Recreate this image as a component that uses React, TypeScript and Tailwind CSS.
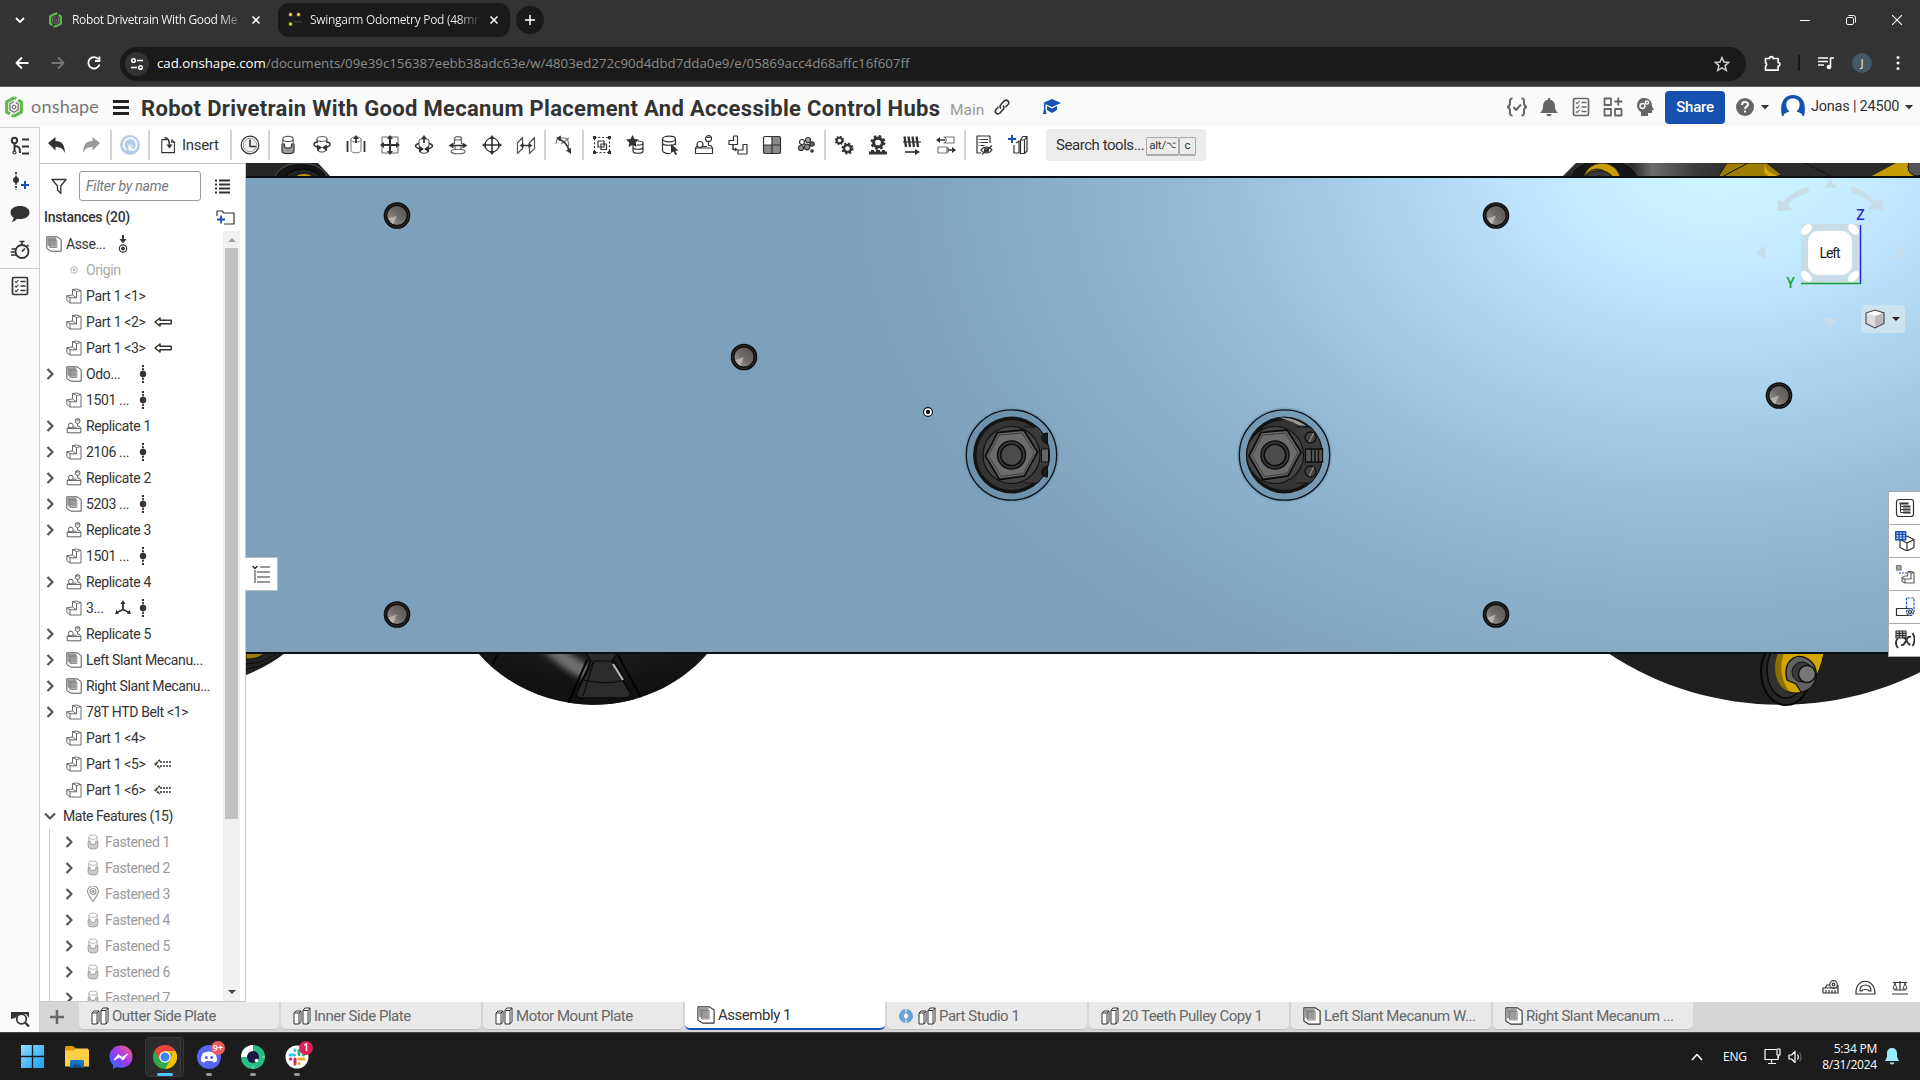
import React from "react";

type P = { children?: React.ReactNode; className?: string; vb?: string };

/** 20px line icon shell shared by every glyph on the page. */
const I = ({ children, className = "size-5", vb = "0 0 20 20" }: P) => (
  <svg viewBox={vb} className={`shrink-0 ${className}`} fill="none" stroke="currentColor" strokeWidth="1.2" strokeLinejoin="round">
    {children}
  </svg>
);

/* ---------- toolbar glyphs ---------- */
const Cyl = () => (
  <g stroke="#777" strokeWidth="1">
    <ellipse cx="10" cy="4.500" rx="5" ry="2.500" />
    <path d="M5 4.500v11c0 3 10 3 10 0v-11" />
  </g>
);
const Fastened = ({ className }: { className?: string }) => (
  <I className={className}>
    <path d="M4 9v7c0 3.500 12 3.500 12 0V9h-2.500v2.500c0 2-7 2-7 0V9z" fill="#9a9a9a" stroke="#333" />
    <ellipse cx="10" cy="4" rx="5.200" ry="2.600" stroke="#666" />
    <path d="M4.800 4v7M15.200 4v7" stroke="#666" />
  </I>
);
const Revolute = () => (
  <I><ellipse cx="10" cy="4" rx="5" ry="2.500" stroke="#666" /><path d="M5 4v4M15 4v4M5.500 14c1 4 8 4 9 0" stroke="#666" />
    <path d="M7.500 12.500C4 12 2 10.500 2 9.500M12.500 12.500C16 12 18 10.500 18 9.500M2 9.500C2 8 4 7 6 7M18 9.500C18 8 16 7 14 7" strokeWidth="1.500" /><path d="M5 9.500l5 3L5 16zM15 9.500l-5 3 5 3.500z" fill="currentColor" stroke="none" /></I>
);
const Slider = () => (
  <I><Cyl /><path d="M1.500 6v11M18.500 6v11" strokeWidth="1.800" /><path d="M10 8V2" strokeWidth="1.800" /><path d="M7 4l3-4 3 4z" fill="currentColor" stroke="none" /></I>
);
const Planar = () => (
  <I><path d="M2 2h16v16H2z" strokeWidth="1" stroke="#666" /><path d="M10 3v14M3 10h14" strokeWidth="2" /><path d="M10 0l3 4H7zM10 20l3-4H7zM0 10l4-3v6zM20 10l-4-3v6z" fill="currentColor" stroke="none" /></I>
);
const Cylindrical = () => (
  <I><path d="M5 6v5M15 6v5M5 6c0-3 10-3 10 0M6 16c1 3 7 3 8 0" stroke="#666" /><path d="M10 8V3" strokeWidth="1.800" /><path d="M7 4l3-4 3 4z" fill="currentColor" stroke="none" />
    <path d="M8 14C4 14 1.500 12 1.500 11S3 9 5 8.500M12 14c4 0 6.500-2 6.500-3S17 9 15 8.500" strokeWidth="1.500" /><path d="M5 10.500l5 3.500-5 3.500zM15 10.500L10 14l5 3.500z" fill="currentColor" stroke="none" /></I>
);
const PinSlot = () => (
  <I><path d="M6.500 9V3.500C6.500 1 13.500 1 13.500 3.500V9M6.500 3.500c0 2 7 2 7 0M3 16.500c0-3 14-3 14 0s-14 3-14 0M7 11v3M13 11v3" stroke="#666" /><path d="M4 10.500h12" strokeWidth="1.500" /><path d="M.5 10.500l5-3v6zM19.500 10.500l-5-3v6z" fill="currentColor" stroke="none" /></I>
);
const Ball = () => (
  <I><circle cx="10" cy="10" r="7" /><path d="M10 2v16M2 10h16" strokeWidth="1.600" /><path d="M10 0l3 4H7zM10 20l3-4H7zM0 10l4-3v6zM20 10l-4-3v6z" fill="currentColor" stroke="none" /></I>
);
const Parallel = () => (
  <I><path d="M1.500 18.500V8l5-5.500v11zM13.500 18.500V8l5-5.500v11z" stroke="#555" /><path d="M6 10.500h8" strokeWidth="1.500" /><path d="M3.500 10.500l4-2.500v5zM16.500 10.500l-4-2.500v5z" fill="currentColor" stroke="none" /></I>
);
const Tangent = () => (
  <I><path d="M2 9c0-4 2-6 5-6M7 3h4c3 1 4 3 3.500 8M7 9l8-6" stroke="#777" /><path d="M5 4c5 2 8 5 10 11" strokeWidth="1.800" /><path d="M2 3l5-2.500-.5 6zM17 19l-5-3.500 5-2.500z" fill="currentColor" stroke="none" /></I>
);
const Group = () => (
  <I><rect x="2.500" y="2.500" width="15" height="15" strokeDasharray="2 1.800" /><path d="M6 6h6v6H6zM9 9h5.500v5.500H9z" /><path d="M1 1h3v3H1zM16 1h3v3h-3zM1 16h3v3H1zM16 16h3v3h-3z" fill="currentColor" stroke="none" /></I>
);
const StarCyl = () => (
  <I><path d="M7 9v7c0 3 10 3 10 0V7M7 12c0 3 10 3 10 0M12 6c3 0 5 .5 5 2s-3 2.500-6 2" /><path d="M6.500 0l2 4 4.500.500-3.300 3L10.500 12 6.500 10l-4 2 .8-4.500L0 4.500 4.500 4z" fill="currentColor" stroke="none" /></I>
);
const CylPick = () => (
  <I><ellipse cx="9" cy="4" rx="6.500" ry="2.800" /><path d="M2.500 4v11.500c0 2 4 3.500 8 2.800M15.500 4v6M2.500 8c0 3 13 3 13 0" /><path d="M11 9l7.500 6.500-3.200.3 1.800 3.500-1.800.7-1.600-3.500L11 18z" fill="currentColor" stroke="none" /></I>
);
const Replicate = ({ className }: { className?: string }) => (
  <I className={className}><circle cx="14.500" cy="3.700" r="3" /><path d="M14.500 6.700V10.500M12.500 2.500h4" /><circle cx="6" cy="9.500" r="3" /><path d="M1.500 13h17v5.500h-17zM1.500 13l2-2M18.500 13L17 10.500h-2M9 11.500h4" /></I>
);
const LinPattern = () => (
  <I><path d="M5.500 1h4v8.500H1V5.500h4.500zM15 9.500h4V19H10v-4h5z" /><path d="M5 10v4.500h3" strokeWidth="1.500" /><path d="M7 12.500l3 2-3 2z" fill="currentColor" stroke="none" /></I>
);
const Grid4 = () => (
  <I><rect x="1.500" y="1.500" width="17" height="17" rx="1.500" fill="#8a8a8a" stroke="#333" /><path d="M2.200 2.200H10V10H2.200z" fill="#fff" stroke="none" /><path d="M10 1.500v17M1.500 10h17" /></I>
);
const Explode = () => (
  <I><circle cx="6" cy="7" r="2.500" /><circle cx="12" cy="5" r="2.500" fill="#aaa" /><circle cx="5" cy="13" r="2.500" fill="#999" /><circle cx="11" cy="12" r="2.800" fill="#888" /><circle cx="16" cy="9" r="2.200" fill="#666" /><circle cx="16" cy="16" r="1.200" fill="#444" /></I>
);
const Gear = ({ x, y, r }: { x: number; y: number; r: number }) => (
  <g><circle cx={x} cy={y} r={r} strokeWidth={r * 0.7} /><circle cx={x} cy={y} r={r * 1.45} strokeWidth={r * 0.5} strokeDasharray={`${r * 0.57} ${r * 0.57}`} /></g>
);
const Gears = () => <I><Gear x={5.500} y={5.500} r={2.800} /><Gear x={13.500} y={13.500} r={3.600} /></I>;
const RackGear = () => <I><Gear x={10} y={7.500} r={4.400} /><path d="M1 19.500v-3h2V15h3v1.500h2V15h4v1.500h2V15h3v1.500h2v3z" fill="currentColor" stroke="none" /></I>;
const Screw = () => <I><path d="M2.500 1.500L4 12M6.500 1.500L8 12M10.500 1.500L12 12M14.500 1.500L16 12" strokeWidth="2.300" /><path d="M1 7h18" /><path d="M3 17h11" strokeWidth="1.600" /><path d="M13 14l5 3-5 3z" fill="currentColor" stroke="none" /></I>;
const LinRel = () => <I><path d="M8 2h10v6H8c3-1 3-5 0-6zM2 12h9v6H2zM11 12c2 1 2 5 0 6" stroke="#777" /><path d="M3 5h6M12 15h5" strokeWidth="1.600" /><path d="M0 5l4-3v6zM20 15l-4-3v6z" fill="currentColor" stroke="none" /></I>;
const Display = () => <I><path d="M16 8V1H3v17h4" /><path d="M6.500 4.500H14M6.500 7.500H14M6.500 10.500h4M4.500 4.500h1M4.500 7.500h1M4.500 10.500h1" /><path d="M7 15c3-4 8-4 11 0-3 4-8 4-11 0z" /><circle cx="12.500" cy="15" r="2" fill="#666" /><path d="M8 19.500l10-9" /></I>;
const AddCfg = () => <I><path d="M8 8l3-2v12H6v-8M11 18V6M12.500 5L15 1.500h4V16l-2.500 2.500h-4zM12.500 5h4v13.500M16.500 5L19 1.500" /><path d="M4 0v8M0 4h8" stroke="#1651b0" strokeWidth="2" /></I>;

/* ---------- tree glyphs ---------- */
const PartIcon = () => (
  <I className="size-4" vb="0 0 16 16"><path d="M6.500 7V1.500L10.500 1 15 2.500v12.500H4L.8 12.500V7.800L6.500 7M4 15v-5.200h6.500V3.500M.8 7.800L4 9.800M6.500 7l4 2.800M6.500 1.500l4 2 4.500-1" stroke="#5a5a5a" strokeWidth=".9" /></I>
);
const AsmIcon = ({ className = "size-4 text-[#555]" }: { className?: string }) => (
  <I className={className} vb="0 0 16 16"><path d="M.8.8H11L15.200 3.500v11.700H5L.8 12.500z" strokeWidth="1" fill="#fff" /><path d="M1.300 1.300h9v9.500H4L1.300 9z" fill="#9b9b9b" stroke="none" /><path d="M2 2.500l2 1.500h6.800v7.500H4V4" stroke="#777" strokeWidth=".8" /></I>
);
const StudioIcon = () => (
  <I className="size-[18px]" vb="0 0 18 18"><path d="M1 6l2-2h5v10.500L6 17H1zM1 6h5v11M6 6l2-2M10 3.500l2-2.500h5v13.500L15 17h-5zM10 3.500h5V17M15 3.500L17 1" stroke="#333" strokeWidth="1" fill="#fff" /></I>
);
const Dof = () => (
  <I className="size-[18px]" vb="0 0 18 18"><path d="M9 0v18" strokeWidth="2" strokeDasharray="2 1.200" /><circle cx="9" cy="9" r="3.200" fill="currentColor" stroke="none" /></I>
);
const Fixed = () => (
  <I className="size-[18px]" vb="0 0 18 18"><path d="M9 0v6" strokeWidth="2" /><path d="M5.500 4h7L9 8.500z" fill="currentColor" stroke="none" /><circle cx="9" cy="13.500" r="3.700" /><circle cx="9" cy="13.500" r="1.300" fill="currentColor" /></I>
);
const Tri = () => (
  <I className="size-4" vb="0 0 16 16"><path d="M8 2v7.500L2 12.500M8 9.500l6 3" strokeWidth="1.800" /><path d="M5.500 4L8 0l2.500 4zM0 14l1.500-4.200 2.500 4zM16 14l-1.500-4.200-2.500 4z" fill="currentColor" stroke="none" /></I>
);
const Arrow = ({ dash }: { dash?: boolean }) => (
  <I className="h-[10px] w-[18px]" vb="0 0 18 10">
    {dash ? (
      <g strokeWidth="1.700"><path d="M6 1L1.200 5 6 9" strokeDasharray="2.200 .7" /><path d="M6 3h12M6 7h12" strokeDasharray="2 1" /></g>
    ) : (
      <path d="M1 5l5-4v2.200h11.200v3.600H6V9z" strokeWidth="1.500" />
    )}
  </I>
);
const Chev = ({ down }: { down?: boolean }) => (
  <I className={down ? "w-3 h-2" : "w-2 h-3"} vb={down ? "0 0 12 8" : "0 0 8 12"}><path d={down ? "M1 1.500l5 5 5-5" : "M1.500 1l5 5-5 5"} stroke="#555" strokeWidth="2.200" /></I>
);
const Checklist = ({ className }: { className?: string }) => (
  <I className={className}><rect x="2.500" y="1.500" width="15" height="17" rx="1.500" strokeWidth="1.700" /><path d="M5 5.500l1.200 1.200L8.500 4M5 10l1.200 1.200L8.500 8.500M5 14.500l1.200 1.200L8.500 13" strokeWidth="1.100" /><path d="M10.500 5.500h5M10.500 10h5M10.500 14.500h5" strokeWidth="1.700" /></I>
);
const OnshapeMark = ({ className }: { className?: string }) => (
  <svg viewBox="0 0 20 24" className={`shrink-0 ${className}`} fill="none">
    <path d="M10.500 1.800L2 6.500v11l3.500 2M9.500 22.200l8.500-4.700v-11L14.500 4.500M10.500 1.800l2 1.200M9.500 22.200l-2-1.200" stroke="#5db947" strokeWidth="3.400" />
    <path d="M10 6L5.500 8.700v6.500L10 17.800l4.500-2.600V8.700L12 7.300" stroke="#777" strokeWidth="1.500" />
    <path d="M10 10l-1.800 1v2.300l1.800 1 1.800-1V11z" stroke="#777" strokeWidth="1.400" />
  </svg>
);
const Caret = () => <svg viewBox="0 0 8 5" className="w-2 h-[5px] shrink-0"><path d="M0 0h8L4 4.500z" fill="#333" /></svg>;

/* ---------- tree data ---------- */
type Row = { t: string; k: "asm" | "part" | "rep"; c?: boolean; m?: "dof" | "arrow" | "dash" | "tri" };
const rows: Row[] = [
  { t: "Part 1 <1>", k: "part" },
  { t: "Part 1 <2>", k: "part", m: "arrow" },
  { t: "Part 1 <3>", k: "part", m: "arrow" },
  { t: "Odo...", k: "asm", c: true, m: "dof" },
  { t: "1501 ...", k: "part", m: "dof" },
  { t: "Replicate 1", k: "rep", c: true },
  { t: "2106 ...", k: "part", c: true, m: "dof" },
  { t: "Replicate 2", k: "rep", c: true },
  { t: "5203 ...", k: "asm", c: true, m: "dof" },
  { t: "Replicate 3", k: "rep", c: true },
  { t: "1501 ...", k: "part", m: "dof" },
  { t: "Replicate 4", k: "rep", c: true },
  { t: "3...", k: "part", m: "tri" },
  { t: "Replicate 5", k: "rep", c: true },
  { t: "Left Slant Mecanu...", k: "asm", c: true },
  { t: "Right Slant Mecanu...", k: "asm", c: true },
  { t: "78T HTD Belt <1>", k: "part", c: true },
  { t: "Part 1 <4>", k: "part" },
  { t: "Part 1 <5>", k: "part", m: "dash" },
  { t: "Part 1 <6>", k: "part", m: "dash" },
];

const TreeRow = ({ r }: { r: Row }) => (
  <div className="flex h-[26px] items-center">
    <span className="flex w-[20px] justify-center">{r.c && <Chev />}</span>
    <span className="ml-[6px] flex w-4">{r.k === "part" ? <PartIcon /> : r.k === "asm" ? <AsmIcon /> : <Replicate className="size-4 text-[#555]" />}</span>
    <span className={`ml-1 whitespace-nowrap pt-px ${r.m === "dof" ? "w-[48px]" : r.m === "tri" ? "w-[29px]" : r.m ? "w-[68px]" : ""}`}>{r.t}</span>
    {r.m === "tri" && <Tri />}
    {(r.m === "dof" || r.m === "tri") && <span className={r.m === "tri" ? "ml-[3px]" : ""}><Dof /></span>}
    {r.m === "arrow" && <Arrow />}
    {r.m === "dash" && <Arrow dash />}
  </div>
);

const Tool = ({ children, className = "" }: P) => <span className={`flex h-8 w-[34px] items-center justify-center ${className}`}>{children}</span>;
const Sep = () => <span className="mx-px h-[30px] w-[2px] bg-[#d4d4d4]" />;

/* ---------- 3D viewport ---------- */
const Hole = ({ x, y }: { x: number; y: number }) => (
  <g transform={`translate(${x} ${y})`}>
    <circle r="13.300" fill="#0c0c0c" /><circle r="11.500" fill="none" stroke="#444" strokeWidth=".7" />
    <circle r="9.600" fill="url(#cone)" /><path d="M0 0l-8.500 3 4.500 6z" fill="#e8e0dc" opacity=".5" />
  </g>
);
const Hub = ({ x, dx }: { x: number; dx: number }) => (
  <g transform={`translate(${x} 455)`}>
    <circle r="46" fill="none" stroke="#5f87a3" strokeWidth="3" opacity=".35" />
    <circle r="42" fill="none" stroke="#5b7f99" strokeWidth="7" opacity=".5" />
    <circle r="45.200" fill="none" stroke="#0d1115" strokeWidth="1.300" />
    <circle r="38.500" fill="#141414" />
    <circle r="35.500" fill="#343434" stroke="#111" strokeWidth="1" />
    {dx !== 0 && <path d="M-5-37.500C8-37 15-34 22-29l-8-1C7-34 2-35-5-37.500z" fill="#9a9a9a" />}
    <path d="M12-28h14c16 16 16 40 0 56H12" fill="#3a3a3a" stroke="#111" strokeWidth="1" />
    {dx !== 0 ? (
      <g stroke="#0d0d0d" strokeWidth="1.300"><circle cx="26" cy="-17.500" r="5.500" fill="#444" /><circle cx="26" cy="16.500" r="5.500" fill="#444" /><path d="M25-13l4-9M25 21l4-9" stroke="#888" /><path d="M21-6h17V7H21z" fill="#555" /><path d="M27-6V7M30.500-6V7M34-6V7" /></g>
    ) : (
      <g stroke="#0d0d0d" strokeWidth="1"><path d="M30-6h7V7h-7z" fill="#666" /><path d="M36-22c-8 0-8 9 0 11zM36 22c-8 0-8-9 0-11z" fill="#1a1a1a" /></g>
    )}
    <g transform={`translate(${dx} 0)`}>
      <circle r="28.500" fill="#454545" stroke="#111" strokeWidth="1.200" />
      <path d="M-26 1L-14-22.500 12-25 26-3 13 21-12 24.500z" fill="#6c6c6c" stroke="#0e0e0e" strokeWidth="1.800" />
      <path d="M-23 .8L-12.500-20 10.500-22 23-2.600 12 18.500-10.500 21.500z" fill="none" stroke="#303030" strokeWidth=".8" />
      <circle r="14" fill="#3c3c3c" stroke="#111" strokeWidth="1.500" /><circle r="10.800" fill="#4b4b4b" stroke="#0c0c0c" strokeWidth="1.500" />
    </g>
  </g>
);

const Viewport = () => (
  <svg viewBox="246 163 1674 839" className="block h-[839px] w-[1674px]">
    <defs>
      <radialGradient id="plate" gradientUnits="userSpaceOnUse" cx="0" cy="0" r="1" gradientTransform="translate(1725 155) rotate(-4) scale(870 600)">
        <stop offset="0" stopColor="#d0f5ff" /><stop offset=".12" stopColor="#c9f0ff" /><stop offset=".24" stopColor="#bee4fe" />
        <stop offset=".4" stopColor="#aad2ec" /><stop offset=".6" stopColor="#96bbd5" /><stop offset=".8" stopColor="#87adc7" /><stop offset="1" stopColor="#7da1bb" />
      </radialGradient>
      <linearGradient id="cone" x1="0" y1="1" x2="1" y2="0"><stop offset="0" stopColor="#a8a19d" /><stop offset=".5" stopColor="#6f6a67" /><stop offset="1" stopColor="#565250" /></linearGradient>
      <radialGradient id="tyre" cx=".5" cy="0" r=".7"><stop offset="0" stopColor="#1c1c1c" /><stop offset="1" stopColor="#111" /></radialGradient>
      <linearGradient id="metal" x1="0" x2="1"><stop offset="0" stopColor="#222" /><stop offset=".2" stopColor="#6c6c6c" /><stop offset=".6" stopColor="#3a3a3a" /><stop offset="1" stopColor="#2a2a2a" /></linearGradient>
      <filter id="soft"><feGaussianBlur stdDeviation="3" /></filter>
      <clipPath id="lw"><path d="M478 653c60 69 170 69 230 0z" /></clipPath>
    </defs>
    <path d="M246 163h1674v839H246z" fill="#fff" />
    {/* wheels above the plate */}
    <path d="M246 163h72l13 14h-85z" fill="#262626" />
    <ellipse cx="301" cy="181" rx="27" ry="18" fill="#141414" stroke="#555" /><ellipse cx="303" cy="182" rx="19" ry="13" fill="#222" stroke="#000" /><ellipse cx="304" cy="180" rx="10" ry="6" fill="#c79b00" />
    <path d="M1562 177l14-14h344v14z" fill="#2a2a2a" />
    <path d="M1630 163h110l-18 14h-85z" fill="url(#metal)" />
    <ellipse cx="1604" cy="179" rx="34" ry="20" fill="#161616" stroke="#444" /><ellipse cx="1602" cy="182" rx="19" ry="19" fill="#c99c00" stroke="#222" /><ellipse cx="1597" cy="181" rx="13" ry="12" fill="#7d6300" stroke="#222" /><path d="M1586 176c6-7 20-7 26 0l-4 3c-6-4-12-4-18 0z" fill="#3a3a3a" stroke="#111" />
    <path d="M1727 163h40l15 12-10 2h-54z" fill="#9e7d05" stroke="#111" /><path d="M1765 163c0 7 4 12 20 14h-16l-5-5z" fill="#dcaf00" /><path d="M1722 177l26-14" stroke="#111" />
    <path d="M1805 163l28 14" stroke="#111" /><path d="M1870 177l26-14h24v14z" fill="#c49b00" /><circle cx="1917" cy="167" r="9" fill="#555" stroke="#111" />
    {/* wheels below the plate */}
    <path d="M246 653h39c-11 9-24 16-39 22z" fill="#232323" /><path d="M246 653h18c-3 4-9 6-18 6z" fill="#9b7c00" stroke="#111" /><path d="M246 664c14-1 22-4 31-11M246 669c16-2 26-8 36-16" fill="none" stroke="#0a0a0a" />
    <path d="M478 653c60 69 170 69 230 0z" fill="url(#tyre)" />
    <g clipPath="url(#lw)">
      <path d="M540 650h25l27 18-5 13c-20-8-30-20-47-31z" fill="#8d8d8d" filter="url(#soft)" opacity=".75" />
      <path d="M588 655l26 0 2 8 20 36-2 6H568l24-46z" fill="#101010" />
      <path d="M586 653l5 8-14 32c-1 3 1 5 5 5h43c5 0 6-3 5-6l-18-31 6-8z" fill="#2b2b2b" stroke="#090909" strokeWidth="1.500" />
      <path d="M594 661h21l10 19c-14 4-26 3-42 0zM594 661l-11 35M612 661l17 31" fill="none" stroke="#070707" />
      <path d="M613 664l10 16" stroke="#bbb" strokeWidth="2" /><path d="M618 655l27 50M587 660l-20 46M497 655l-6 12" stroke="#030303" strokeWidth="2" />
    </g>
    <path d="M1608 653c103 69 243 69 345 0z" fill="#1f1f1f" />
    <ellipse cx="1786" cy="672" rx="25" ry="33" fill="#252525" stroke="#070707" strokeWidth="2" /><ellipse cx="1786" cy="670" rx="19" ry="28" fill="#313131" stroke="#080808" strokeWidth="1.500" />
    <path d="M1780 653h44c-3 16-12 40-28 40-18 0-25-22-16-40z" fill="#d2a800" stroke="#151200" /><path d="M1784 653c-5 14-3 28 6 39-15-4-18-25-12-39z" fill="#8c6f00" />
    <path d="M1787 680c-6-22 15-32 27-15 6 12 0 25-13 27l-5-8z" fill="#626262" stroke="#111" strokeWidth="1.300" /><circle cx="1802" cy="672" r="10" fill="#3a3a3a" stroke="#101010" /><circle cx="1807" cy="674" r="8.500" fill="#777" stroke="#111" strokeWidth="1.500" />
    {/* side plate */}
    <path d="M246 177h1674v476H246z" fill="url(#plate)" />
    <path d="M246 177h1674M246 653h1674" stroke="#0b0f13" strokeWidth="2" />
    <Hole x={397} y={215.500} /><Hole x={1496} y={215.500} /><Hole x={744} y={357} /><Hole x={1779} y={395.500} /><Hole x={397} y={614.500} /><Hole x={1496} y={614.500} />
    <circle cx="928" cy="412" r="4" fill="#111" stroke="#111" strokeWidth="2" /><circle cx="928" cy="412" r="3" fill="#111" stroke="#fff" strokeWidth="1.700" />
    <Hub x={1011.500} dx={0} /><Hub x={1284.500} dx={-9.500} />
    {/* view cube */}
    <g fill="#c9dde9">
      <path d="M1830 179l7 9h-14zM1830 328l7-10h-14zM1756 253l9-7v14zM1905 253l-9-7v14z" />
      <path d="M1808 186l1 6c-9 3-15 7-21 12l4 6-15 1 1-12 5 3c8-8 15-12 25-16zM1852 186l-1 6c9 3 15 7 21 12l-4 5 15 2-1-12-5 3c-8-8-15-12-25-16z" />
      <path d="M1801 224h59v59h-59z" />
    </g>
    <rect x="1808" y="231" width="44" height="44" rx="10" fill="#fff" />
    <g fill="#fff"><ellipse cx="1806.500" cy="229.500" rx="6.500" ry="4" transform="rotate(-45 1806.500 229.500)" /><ellipse cx="1853.500" cy="229.500" rx="6.500" ry="4" transform="rotate(45 1853.500 229.500)" /><ellipse cx="1806.500" cy="276.500" rx="6.500" ry="4" transform="rotate(45 1806.500 276.500)" /><ellipse cx="1853.500" cy="276.500" rx="6.500" ry="4" transform="rotate(-45 1853.500 276.500)" /></g>
    <path d="M1860.500 225v59" stroke="#2020d8" strokeWidth="1.400" /><path d="M1801 283.500h60" stroke="#10a030" strokeWidth="1.400" />
    <g fontFamily="Roboto, sans-serif" textAnchor="middle"><text x="1830" y="258" fontSize="14" fill="#222" textLength="21">Left</text><text x="1860.500" y="219.500" fontSize="14" fontWeight="500" fill="#2a2ae8">Z</text><text x="1790.500" y="288" fontSize="14" fontWeight="500" fill="#16a336">Y</text></g>
    <rect x="1861" y="305" width="44" height="28" rx="3" fill="#d2e4ef" opacity=".85" />
    <path d="M1866 313l9-3 9 3v10.500l-9 4.500-9-4.500z" fill="#fff" /><path d="M1866 313l9 3v12l-9-4.500z" fill="#ddd" /><path d="M1884 313l-9 3v12l9-4.500z" fill="#bbb" /><path d="M1866 313l9-3 9 3v10.500l-9 4.500-9-4.500z" fill="none" stroke="#444" strokeWidth="1.100" /><path d="M1892 317h8l-4 4z" fill="#222" />
    {/* measuring tools */}
    <g fill="none" stroke="#333" strokeWidth="1.200">
      <path d="M1823 988h15v5h-15zM1826 990v3M1829 990v3M1832 990v3M1835 990v3M1825 988l2-3h3M1838 988v-3" /><circle cx="1833.500" cy="984.500" r="3.800" /><circle cx="1833.500" cy="984.500" r="1.300" />
      <path d="M1856 994c-1-17 19-17 19 0zM1860 991c-1-8 12-8 11 0h-2c0-2-7-2-7 0z" />
      <path d="M1893 982.500h14M1900 981v9M1894 990h12M1892 994h16" /><path d="M1895 983l-2 6h4zM1905 983l-2 6h4z" strokeWidth=".9" />
    </g>
  </svg>
);

/* ---------- right side dock ---------- */
const dock = [
  <I><rect x="1.500" y="1.500" width="17" height="17" rx="2.500" /><path d="M4.500 5.500h9M8 8.500h7.500M8 11.500h7.500M8 14.500h7.500" strokeWidth="1.900" /><path d="M5.500 5.500v9H8M5.500 8.500H8M5.500 11.500H8" strokeWidth="1" /></I>,
  <I><path d="M5 8l7-3 7 3.500v8L12 20l-7-3.500zM12 12v8M5 8.500l7 3.500 7-3.500" /><path d="M.7.7h10v8H.7z" fill="#bcd4f5" stroke="#1651b0" strokeWidth="1.400" /><path d="M4 1v8M7.500 1v8M1 3.400h9.500M1 6h9.500" stroke="#1651b0" /></I>,
  <I><path d="M1.500 1.500h4.500v4.500H1.500z" fill="#aaa" stroke="#777" /><path d="M4 9h8" stroke="#1651b0" strokeDasharray="2 1" /><path d="M13 7.500h3.500L19 8.500V19H10l-3-1.500v-4L10 12h2.500zM13 7.500l3 1.500v6H10l-3-1M10 15v4M16 9l3-.5" stroke="#666" /></I>,
  <I><path d="M1.500 11.500h15v7h-15z" /><path d="M11.500 11V1h7.500v14" stroke="#1651b0" strokeDasharray="2.500 1.200" /><circle cx="15" cy="15" r="3.500" stroke="#1651b0" fill="#ddd" strokeDasharray="2.500 1" /><circle cx="15" cy="15" r="1.500" /></I>,
  <I><path d="M1 1h10v7H1z" fill="#ccc" /><path d="M4.300 1v7M7.600 1v7M1 3.300h10M1 5.700h10" /><path d="M3 8c-2.500 3-2.500 7 0 10M17.500 3c2.500 4 2.500 9 0 13" strokeWidth="1.800" /><path d="M6 15c3 1 4-2 5-4.500s2.500-4.500 5-3.500M8.500 8c4-1 2.500 7 7 6.500" strokeWidth="1.900" /></I>,
];

const tabs: { t: string; k: "s" | "a"; active?: boolean; pre?: boolean }[] = [
  { t: "Outter Side Plate", k: "s" }, { t: "Inner Side Plate", k: "s" }, { t: "Motor Mount Plate", k: "s" },
  { t: "Assembly 1", k: "a", active: true }, { t: "Part Studio 1", k: "s", pre: true }, { t: "20 Teeth Pulley Copy 1", k: "s" },
  { t: "Left Slant Mecanum W...", k: "a" }, { t: "Right Slant Mecanum ...", k: "a" },
];

const Chrome = () => (
  <div className="h-[87px] border-b border-[#5c5c5c] bg-[#333] font-['Open_Sans',sans-serif] text-white">
    <div className="flex h-10 items-center">
      <I className="ml-[15px] size-[10px]" vb="0 0 10 10"><path d="M1 3l4 4 4-4" strokeWidth="1.800" /></I>
      <OnshapeMark className="ml-[23px] h-4 w-[15px]" />
      <div className="ml-[9px] w-[169px] overflow-hidden whitespace-nowrap bg-gradient-to-r from-white from-[88%] to-[#555] bg-clip-text text-[12px] tracking-[-0.35px] text-transparent">Robot Drivetrain With Good Me</div>
      <I className="ml-[10px] size-[10px]" vb="0 0 10 10"><path d="M1.500 1.500l7 7M8.500 1.500l-7 7" strokeWidth="1.600" /></I>
      <div className="ml-[17px] flex h-[34px] w-[232px] items-center rounded-[11px] bg-[#1a1a1a]">
        <svg viewBox="0 0 14 16" className="ml-[10px] h-4 w-[14px]"><g fill="#3a3a3a"><circle cx="2.500" cy="2.500" r="2.500" /><circle cx="10.500" cy="2.500" r="2.500" /><circle cx="2.500" cy="12" r="2.500" /><path d="M6 9h8v1.500H6z" /></g><g fill="#fd0"><circle cx="2.500" cy="2.500" r="1.500" /><circle cx="10.500" cy="2.500" r="1.500" /><circle cx="2.500" cy="12" r="1.500" /></g></svg>
        <div className="ml-2 w-[169px] overflow-hidden whitespace-nowrap bg-gradient-to-r from-[#f0f0f0] from-[88%] to-[#333] bg-clip-text text-[12px] tracking-[-0.3px] text-transparent">Swingarm Odometry Pod (48mr</div>
        <I className="ml-[10px] size-[10px]" vb="0 0 10 10"><path d="M1.500 1.500l7 7M8.500 1.500l-7 7" strokeWidth="1.500" /></I>
      </div>
      <span className="ml-[6px] flex size-7 items-center justify-center rounded-full bg-[#1a1a1a]"><I className="size-3" vb="0 0 12 12"><path d="M6 1v10M1 6h10" strokeWidth="1.500" /></I></span>
      <div className="ml-auto mr-[18px] flex items-center gap-9">
        <I className="size-[10px]" vb="0 0 10 10"><path d="M0 5.500h10" strokeWidth="1" /></I>
        <I className="size-[10px]" vb="0 0 10 10"><rect x=".5" y="2.500" width="7" height="7" rx="1.300" strokeWidth="1" /><path d="M2.500.5h5a2 2 0 0 1 2 2v5" strokeWidth="1" /></I>
        <I className="size-[10px]" vb="0 0 10 10"><path d="M0 0l10 10M10 0L0 10" strokeWidth="1.100" /></I>
      </div>
    </div>
    <div className="flex h-[46px] items-center">
      <I className="ml-[14px] size-4" vb="0 0 16 16"><path d="M14.500 8H2.500M8 2.500L2.500 8 8 13.500" strokeWidth="1.800" /></I>
      <I className="ml-[20px] size-4 text-[#777]" vb="0 0 16 16"><path d="M1.500 8h12M8 2.500L13.500 8 8 13.500" strokeWidth="1.800" /></I>
      <I className="ml-[20px] size-4" vb="0 0 16 16"><path d="M13.500 9.500A5.700 5.700 0 1 1 12.500 4.200M13.500 1.500v4.500H9" strokeWidth="1.800" /></I>
      <div className="ml-[18px] mt-px flex h-[34px] w-[1626px] items-center rounded-full bg-[#1a1a1a]">
        <span className="ml-[5px] flex size-6 items-center justify-center rounded-full bg-[#333]"><I className="size-3.5" vb="0 0 14 14"><circle cx="3.500" cy="3.500" r="1.800" strokeWidth="1.500" /><circle cx="10.500" cy="10.500" r="1.800" strokeWidth="1.500" /><path d="M7 3.500h6M1 10.500h6" strokeWidth="1.500" /></I></span>
        <span className="ml-2 text-[13.3px] tracking-[-0.02px] text-[#8c8c8c]"><span className="text-white">cad.onshape.com</span>/documents/09e39c156387eebb38adc63e/w/4803ed272c90d4dbd7dda0e9/e/05869acc4d68affc16f607ff</span>
        <I className="ml-auto mr-[16px] size-4 text-[#ccc]" vb="0 0 16 16"><path d="M8 1.500l2 4.500 4.800.4-3.700 3.200 1.200 4.800L8 11.800l-4.300 2.600 1.200-4.800L1.200 6.400 6 6z" strokeWidth="1.500" strokeLinejoin="miter" /></I>
      </div>
      <I className="ml-[18px] size-[17px]" vb="0 0 17 17"><path d="M1.500 3.500h4a1.800 1.800 0 0 1 3.600 0h5v4a1.800 1.800 0 0 1 0 3.600v4H1.500v-3.600a2.400 2.400 0 0 0 0-4z" strokeWidth="1.700" /></I>
      <span className="ml-[17px] h-4 w-[2px] bg-[#1a1a1a]" />
      <I className="ml-[18px] size-4" vb="0 0 16 16"><path d="M0 3h10M0 6.500h10M0 10h6M12.500 12V3H16" strokeWidth="1.600" /><circle cx="11" cy="12" r="2.300" fill="currentColor" stroke="none" /></I>
      <span className="ml-[18px] flex size-5 items-center justify-center rounded-full bg-[#435a66] text-[10px]">J</span>
      <svg viewBox="0 0 4 16" className="ml-[24px] h-4 w-1" fill="#fff"><circle cx="2" cy="2.500" r="1.500" /><circle cx="2" cy="8" r="1.500" /><circle cx="2" cy="13.500" r="1.500" /></svg>
    </div>
  </div>
);

const DocHeader = () => (
  <div className="flex h-10 items-center bg-[#fafafa] text-[#333]">
    <OnshapeMark className="ml-1 h-[22px] w-5" />
    <span className="-mt-[3px] ml-[7px] w-[69px] font-['Lato',sans-serif] text-[18px] leading-5 tracking-[0.2px] text-[#777]">onshape</span>
    <div className="ml-[13px] flex w-4 flex-col gap-[3px]"><span className="h-[3px] bg-[#222]" /><span className="h-[3px] bg-[#222]" /><span className="h-[3px] bg-[#222]" /></div>
    <span className="ml-3 mt-[3px] w-[801px] whitespace-nowrap text-[22px] font-bold tracking-[0.32px]">Robot Drivetrain With Good Mecanum Placement And Accessible Control Hubs</span>
    <span className="ml-[8px] mt-[7px] w-[34px] text-[15.5px] text-[#999]">Main</span>
    <I className="ml-[10px] size-4" vb="0 0 16 16"><path d="M7 9.500c-1.500-1.500-1-3 0-4l3-3.500c3-2.500 6 1 4 3.500L11.500 8M9 6.500c1.500 1.500 1 3 0 4L6 14c-3 2.500-6-1-4-3.500L4.500 8" strokeWidth="1.600" /></I>
    <svg viewBox="0 0 18 16" className="ml-[33px] h-4 w-[18px]" fill="#1651b0"><path d="M9 0l9 4-9 4-9-4zM4 7l5 2.500L14 7v4l-5 3-5-3zM1 5h1.500v5l1 5H0l1-5z" /></svg>
    <div className="ml-auto flex items-center text-[#666]">
      <I><path d="M5.500 1.500C2.500 1 3 4 3 6.500S2 9.500.5 10C2 10.500 3 11 3 13.500s-.5 5.500 2.500 5M14.500 1.500c3-.5 2.500 2.500 2.500 5s1 3 2.500 3.500C18 10.500 17 11 17 13.500s.5 5.500-2.500 5M6.500 10l2.500 3 5-5.500" strokeWidth="2" /></I>
      <svg viewBox="0 0 18 20" className="ml-[13px] h-5 w-[18px]" fill="#666"><path d="M8 1h2v1.500c3.500 1 5 3.500 5 7 0 3 1 4.500 3 6.500H0c2-2 3-3.500 3-6.500 0-3.500 1.500-6 5-7zM6.500 17h5c0 3-5 3-5 0z" /></svg>
      <Checklist className="ml-[13px] size-5" />
      <I className="ml-[12px] size-5"><path d="M1.500 1.500H8V8H1.500zM1.500 12H8v6.500H1.500zM12 12h6.500v6.500H12zM15.300.5v8M11.300 4.500h8" strokeWidth="1.800" /></I>
      <svg viewBox="0 0 20 20" className="ml-[12px] size-5" fill="#666"><path d="M6 19v-4C0 12 1 1 9 1c6 0 8 4 8 8l2 4h-2v3h-4v3z" /><g fill="none" stroke="#fafafa" strokeWidth="1.500"><circle cx="7.500" cy="9" r="2.400" /><circle cx="12" cy="5.500" r="1.600" /></g></svg>
      <span className="ml-[10px] flex h-[33px] w-[60px] items-center justify-center rounded-[4px] bg-[#1651b0] text-[15px] font-medium tracking-[-0.2px] text-white">Share</span>
      <svg viewBox="0 0 18 18" className="ml-[11px] size-[18px]"><circle cx="9" cy="9" r="9" fill="#666" /><path d="M6 7c0-4 6-4 6-.5C12 8.500 9 8.500 9 11M9 12.500v2" stroke="#fff" strokeWidth="2" fill="none" /></svg>
      <span className="ml-[7px] flex"><Caret /></span>
      <svg viewBox="0 0 24 24" className="ml-3 size-6"><path d="M1 21C-2 8 3 0 12 0s14 8 11 21z" fill="#1651b0" /><path d="M12 3.500c-9 0-7.500 10-3.500 13-3 1-6 2-6 5l3 2.500h13l3-2.500c0-3-3-4-6-5 4-3 5.500-13-3.500-13z" fill="#fff" /></svg>
      <span className="ml-[6px] w-[89px] whitespace-nowrap text-[14.5px] tracking-[-0.22px] text-[#333]">Jonas | 24500</span>
      <span className="ml-[5px] mr-[7px] flex"><Caret /></span>
    </div>
  </div>
);

const Toolbar = () => (
  <div className="flex h-9 items-center bg-white text-[#333]">
    <Tool><I><path d="M1 8l7.500-6v4c7 0 9 4 9.500 12-2-4-4-6-9.500-6v3.500z" fill="currentColor" stroke="none" /></I></Tool>
    <Tool className="mr-px text-[#999]"><I className="size-5 -scale-x-100"><path d="M1 8l7.500-6v4c7 0 9 4 9.500 12-2-4-4-6-9.500-6v3.500z" fill="currentColor" stroke="none" /></I></Tool>
    <Sep />
    <Tool><svg viewBox="0 0 20 20" className="size-5"><circle cx="10" cy="10" r="10" fill="#b3cce9" /><path d="M6.500 15A6.500 6.500 0 1 1 13 15.500" stroke="#fff" strokeWidth="1.700" fill="none" /><path d="M8.500 9v6.500h5.500zM10 9a4 4 0 0 1 3 4" fill="#fff" /></svg></Tool>
    <Sep />
    <div className="flex w-[78px] items-center pl-[9px]">
      <I className="size-[18px]"><path d="M8 4H2v14.500h14V7M16 7l-3-3M13 4v3h4" /><path d="M5 2c4 0 5.500 3 5.500 8" strokeWidth="1.800" /><path d="M7 9.500h7L10.500 14z" fill="currentColor" stroke="none" /></I>
      <span className="ml-[4px] text-[15px] tracking-[-0.3px]">Insert</span>
    </div>
    <Sep />
    <Tool><I><circle cx="10" cy="10" r="8.800" /><circle cx="10" cy="10" r="6.800" stroke="#888" fill="#eee" strokeWidth=".8" /><path d="M10 4.500v7h6" strokeWidth="1.600" /></I></Tool>
    <Sep />
    <Tool><Fastened /></Tool><Tool><Revolute /></Tool><Tool><Slider /></Tool><Tool><Planar /></Tool><Tool><Cylindrical /></Tool><Tool><PinSlot /></Tool><Tool><Ball /></Tool><Tool><Parallel /></Tool>
    <Sep />
    <Tool><Tangent /></Tool>
    <Sep />
    <Tool><Group /></Tool><Tool><StarCyl /></Tool><Tool><CylPick /></Tool><Tool><Replicate /></Tool><Tool><LinPattern /></Tool><Tool><Grid4 /></Tool><Tool><Explode /></Tool>
    <Sep />
    <Tool><Gears /></Tool><Tool><RackGear /></Tool><Tool><Screw /></Tool><Tool><LinRel /></Tool>
    <Sep />
    <Tool><Display /></Tool><Tool><AddCfg /></Tool>
    <div className="ml-[11px] flex h-8 w-[160px] items-center rounded-[3px] bg-[#ececec] pl-[10px]">
      <span className="w-[90px] whitespace-nowrap text-[15px] tracking-[-0.45px]">Search tools...</span>
      <span className="mt-[3px] flex h-[19px] w-[33px] items-center justify-center whitespace-nowrap rounded-[2px] border border-b-2 border-[#aaa] text-[11.5px] tracking-[-0.2px]">alt/<span className="text-[9px]">⌥</span></span>
      <span className="mt-[3px] flex h-[19px] w-[17px] items-center justify-center rounded-[2px] border border-b-2 border-[#aaa] text-[11.500px]">c</span>
    </div>
  </div>
);

const InstancePanel = () => (
  <div className="flex h-[839px] w-[206px] flex-col border-b border-r border-t border-[#c8c8c8] bg-white text-[14px] tracking-[-0.37px] text-[#333]">
    <div className="flex h-[44px] items-center">
      <I className="ml-[11px] size-4" vb="0 0 16 16"><path d="M1 1.500h14L9.800 8v7.500L6.500 12V8z" strokeWidth="1.300" /></I>
      <div className="ml-[12px] flex h-[30px] w-[122px] items-center rounded-[3px] border border-[#999] pl-[6px] italic tracking-[-0.2px] text-[#777]">Filter by name</div>
      <I className="ml-[14px] size-[15px]" vb="0 0 15 15"><path d="M0 1.500h2M4 1.500h11M0 5.500h2M4 5.500h11M0 9.500h2M4 9.500h11M0 13.500h2M4 13.500h11" strokeWidth="2" /></I>
    </div>
    <div className="flex h-[23px] items-start pl-1">
      <span className="-mt-px font-medium tracking-[-0.3px]">Instances (20)</span>
      <I className="ml-auto mr-[10px] mt-[2px] h-[15px] w-[19px]" vb="0 0 19 15"><path d="M1 6V1h5l2 2h10v11H8" /><path d="M5 5.500v8M1 9.500h8" stroke="#1651b0" strokeWidth="1.800" /></I>
    </div>
    <div className="flex min-h-0 flex-1">
      <div className="w-[183px] overflow-hidden">
        <div className="flex h-[26px] items-center pl-[6px]"><AsmIcon /><span className="ml-1 w-[48px] pt-px">Asse...</span><Fixed /></div>
        <div className="flex h-[26px] items-center text-[#aaa]"><I className="ml-[30px] size-2" vb="0 0 8 8"><circle cx="4" cy="4" r="3.200" strokeWidth=".9" /><circle cx="4" cy="4" r="1.200" fill="currentColor" stroke="none" /></I><span className="ml-2 pt-px">Origin</span></div>
        {rows.map((r, i) => <TreeRow key={i} r={r} />)}
        <div className="flex h-[26px] items-center pl-1"><Chev down /><span className="ml-[7px] pt-px tracking-[-0.47px]">Mate Features (15)</span></div>
        <div className="ml-[9px] border-l border-[#ccc]">
          {[1, 2, 3, 4, 5, 6, 7].map((n) => (
            <div key={n} className="flex h-[26px] items-center pl-[15px] text-[#999]">
              <Chev />
              <span className="ml-[12px] flex w-4 opacity-50">{n === 3 ? <I className="size-4 text-[#333]" vb="0 0 16 16"><path d="M8 15.500C5 11 2.500 8 2.500 5.500a5.500 5.500 0 0 1 11 0C13.500 8 11 11 8 15.500z" /><circle cx="8" cy="5.500" r="3" /><circle cx="8" cy="5.500" r="1" /></I> : <Fastened className="size-4" />}</span>
              <span className="ml-1 pt-px">Fastened {n}</span>
            </div>
          ))}
        </div>
      </div>
      <div className="flex w-[17px] flex-col items-center bg-[#f1f1f1]">
        <svg viewBox="0 0 8 4" className="mb-[6px] mt-[7px] h-1 w-2"><path d="M4 0l4 4H0z" fill="#a3a3a3" /></svg>
        <span className="h-[571px] w-[13px] bg-[#c1c1c1]" />
        <svg viewBox="0 0 8 4" className="mb-[7px] mt-auto h-1 w-2"><path d="M4 4l4-4H0z" fill="#444" /></svg>
      </div>
    </div>
  </div>
);

const Rail = () => (
  <div className="flex w-10 shrink-0 flex-col items-center border-r border-t border-[#d0d0d0] bg-[#fafafa] text-[#333]">
    <I className="mt-[8px] size-5"><circle cx="4.500" cy="4.500" r="2.700" strokeWidth="2" /><path d="M4.500 7v8.500M4.500 10c5 0 5.500 2 5.500 7" strokeWidth="2" /><circle cx="4.500" cy="16.500" r="1.500" /><path d="M12 3.500h7M12 10.500h7M12 17.500h7" strokeWidth="2.200" /></I>
    <I className="mt-[15px] size-5"><path d="M6 1v18" strokeWidth="1.700" strokeDasharray="2.200 1.300" /><circle cx="6" cy="9" r="3" fill="currentColor" stroke="none" /><path d="M15 10v8M11 14h8" stroke="#1651b0" strokeWidth="2" /></I>
    <svg viewBox="0 0 20 18" className="mt-[14px] h-[18px] w-5" fill="#333"><path d="M10 1c5.500 0 9.500 2.500 9.500 6.500S15.500 14 10 14c-1 0-2 0-3-.3C5.500 15.500 4 16.500 1.500 17 3 15.500 3.500 14 3.500 12.500 1.500 11.300.5 9.500.5 7.500.5 3.500 4.500 1 10 1z" /></svg>
    <I className="mt-[17px] size-5"><circle cx="12" cy="11.500" r="6.500" strokeWidth="1.800" /><path d="M9.500 1.500h5M12 2v3M17 5l1.500 1.500M12 11.500l3-3M1.500 9h5M.5 12h5M1 15h6" strokeWidth="1.700" /></I>
    <span className="mt-[8px] h-px w-full bg-[#ccc]" />
    <Checklist className="mt-[7px] size-5" />
    <I className="mb-[4px] mt-auto size-5"><path d="M1 4h18v6l-3-4H9l-4 4-4 1z" fill="currentColor" stroke="none" /><circle cx="11.500" cy="11" r="4.800" strokeWidth="1.800" fill="#fafafa" /><path d="M15 14.500l4 4" strokeWidth="2.400" /></I>
  </div>
);

const Taskbar = () => (
  <div className="flex h-12 items-center border-t border-[#444] bg-[#1c1c1c] font-['Open_Sans',sans-serif] text-white">
    <svg viewBox="0 0 24 24" className="ml-[21px] size-[23px]"><defs><linearGradient id="win" x1="0" y1="0" x2="1" y2="1"><stop offset="0" stopColor="#8fdcff" /><stop offset="1" stopColor="#18a0f5" /></linearGradient></defs><path d="M0 0h11.300v11.300H0zM12.700 0H24v11.300H12.700zM0 12.700h11.300V24H0zM12.700 12.700H24V24H12.700z" fill="url(#win)" /></svg>
    <svg viewBox="0 0 24 22" className="ml-[21px] h-[22px] w-6"><path d="M1 0h7l3 2.500V7H0V1z" fill="#dd9c07" /><path d="M0 4.500h9l2-2h11.500L24 4v16.500H0z" fill="#ffcf48" /><path d="M5 15.500c0-1 .5-1.500 1.500-1.500h11c1 0 1.500.5 1.500 1.500v6H5z" fill="#1474c4" /><path d="M8 18.500h8V21H8z" fill="#0d508f" /></svg>
    <svg viewBox="0 0 24 24" className="ml-5 size-6"><defs><linearGradient id="msg" x1="0" y1="1" x2="1" y2="0"><stop offset="0" stopColor="#0a7cff" /><stop offset=".5" stopColor="#a334fa" /><stop offset="1" stopColor="#ff6a6a" /></linearGradient></defs><path d="M12 .5C5.500.5.500 5.200.500 11.700c0 3.500 1.500 6.300 3.500 8.300V24l4-2c1.200.5 2.500.7 4 .7 6.500 0 11.500-4.500 11.500-11S18.500.5 12 .5z" fill="url(#msg)" /><path d="M5 15l4.500-5.500L13 12.500 18.500 9 14 15l-3.500-3z" fill="#fff" stroke="#fff" /></svg>
    <div className="ml-3 mt-[1px] flex h-10 w-[39px] rounded-[4px] border border-[#383838] bg-[#242424]">
      <div className="flex h-full w-[35px] flex-col items-center rounded-[4px] border-r border-[#3c3c3c] bg-[#2b2b2b]">
        <svg viewBox="0 0 24 24" className="ml-1 mt-[7px] size-6 shrink-0"><circle cx="12" cy="12" r="12" fill="#2da94f" /><path d="M22.400 6A12 12 0 0 1 12 24l5.200-9L20 6z" fill="#fdbd00" /><path d="M12 12L22.400 6H12z" fill="#fdbd00" /><path d="M1.600 6A12 12 0 0 1 22.400 6H12v6l-5 3z" fill="#ea4335" /><circle cx="12" cy="12" r="5.800" fill="#fff" /><circle cx="12" cy="12" r="4.500" fill="#3f83f8" /></svg>
        <span className="ml-1 mt-[4px] h-[3px] w-4 shrink-0 rounded-full bg-[#4cc2ff]" />
      </div>
    </div>
    <div className="relative ml-[13px] flex h-10 w-6 flex-col items-center">
      <svg viewBox="0 0 24 24" className="mt-[8px] size-6 shrink-0"><circle cx="12" cy="12" r="12" fill="#5865f2" /><path d="M6 8c4-2 8-2 12 0 1.500 2.500 2 5 2 8-1.500 1.200-2.500 1.500-3.500 1.500L15.500 16h-7l-1 1.500C6.500 17.500 5.500 17 4 16c0-3 .5-5.500 2-8z" fill="#fff" /><circle cx="9.300" cy="12.500" r="1.600" fill="#5865f2" /><circle cx="14.700" cy="12.500" r="1.600" fill="#5865f2" /></svg>
      <span className="mt-[4px] h-[3px] w-[6px] shrink-0 rounded-full bg-[#999]" />
      <span className="absolute -right-1 top-[4px] flex size-[14px] items-center justify-center rounded-full bg-[#ee5a5a] text-[9px] font-semibold">9+</span>
    </div>
    <div className="ml-5 flex h-10 w-6 flex-col items-center">
      <svg viewBox="0 0 24 24" className="mt-[8px] size-6 shrink-0"><circle cx="12" cy="12" r="12" fill="#27bd85" /><path d="M12 12V0A12 12 0 0 0 0 12z" fill="#fff" /><circle cx="12" cy="12" r="6" fill="#1e1540" /><circle cx="15.500" cy="15.500" r="1.800" fill="#fff" /><path d="M12 21v3M21 12h3" stroke="#9de3c8" strokeWidth="1" /></svg>
      <span className="mt-[4px] h-[3px] w-[6px] shrink-0 rounded-full bg-[#999]" />
    </div>
    <div className="relative ml-5 flex h-10 w-6 flex-col items-center">
      <svg viewBox="0 0 24 24" className="mt-[8px] size-6 shrink-0"><circle cx="12" cy="12" r="11.500" fill="#fff" /><g fill="none" strokeWidth="3" strokeLinecap="round"><path d="M5 10h4.500M10 5v.5" stroke="#36c5f0" /><path d="M14 5.500V9.500M18.500 10v-.5" stroke="#2eb67d" /><path d="M14 14h5M14 18.500v-.2" stroke="#ecb22e" /><path d="M10 14v5M5.500 14h.3" stroke="#e01e5a" /></g></svg>
      <span className="mt-[4px] h-[3px] w-[6px] shrink-0 rounded-full bg-[#999]" />
      <span className="absolute -right-1 top-[4px] flex size-[14px] items-center justify-center rounded-full bg-[#e01e5a] text-[10px] font-semibold">1</span>
    </div>
    <div className="ml-auto flex items-center text-[12px]">
      <I className="size-3" vb="0 0 12 12"><path d="M1 9l5-5.500L11 9" strokeWidth="1.600" /></I>
      <span className="ml-[20px] w-6 text-[12px] tracking-[-0.2px]">ENG</span>
      <I className="ml-[17px] h-[17px] w-[17px]" vb="0 0 17 17"><path d="M12 1.500H1v10h13V8M7.500 12v3M4 15.500h8M13 1h3v6h-3zM14.500 7v3" /></I>
      <I className="ml-[7px] h-[14px] w-4" vb="0 0 16 14"><path d="M1 5h2.500L7 1.500v11L3.500 9H1zM9.500 4.500c1 1.500 1 3.500 0 5" /><path d="M11.500 2.500c2 2.500 2 6.500 0 9" stroke="#666" /></I>
      <div className="ml-[10px] w-[63px] whitespace-nowrap text-right text-[12px] leading-4 tracking-[-0.22px]"><div>5:34 PM</div><div>8/31/2024</div></div>
      <svg viewBox="0 0 14 17" className="ml-2 mr-[21px] h-[17px] w-[14px]" fill="#99ebff"><path d="M7 0c3.500 0 5 2.500 5 5.500V9l2 4H0l2-4V5.500C2 2.500 3.500 0 7 0zM4.500 14.500h5c-.5 2.500-4.500 2.500-5 0z" /></svg>
    </div>
  </div>
);

export default function App() {
  return (
    <div className="flex h-[1080px] w-[1920px] flex-col overflow-hidden bg-white font-['Roboto',sans-serif]">
      <Chrome />
      <DocHeader />
      <div className="flex h-[905px]">
        <Rail />
        <div className="flex w-[1880px] flex-col">
          <Toolbar />
          <div className="relative flex h-[839px]">
            <InstancePanel />
            <Viewport />
            <div className="absolute left-[205px] top-[394px] flex h-[34px] w-[33px] items-center justify-center border border-l-0 border-[#bbb] bg-white text-[#333]">
              <I className="size-[18px]" vb="0 0 18 18"><path d="M8 2h10M5 7h13M5 12h13M5 17h13" strokeWidth="1.200" /><path d="M3 5v13" stroke="#999" strokeWidth="2" /><path d="M.5 1L3 3.500 5.500 1" strokeWidth="1.500" /></I>
            </div>
            <div className="absolute right-0 top-[328px] flex w-8 flex-col border-l border-t border-[#aaa] bg-white text-[#333]">
              {dock.map((d, i) => <span key={i} className="flex h-[33px] items-center justify-center border-b border-[#aaa]">{d}</span>)}
            </div>
          </div>
          <div className="flex h-[30px] bg-[#d6d6d6] text-[15px] tracking-[-0.47px] text-[#666]">
            <span className="flex w-[39px] items-center justify-center pr-[6px]"><I className="size-4" vb="0 0 16 16"><path d="M8 1v14M1 8h14" strokeWidth="2.600" /></I></span>
            {tabs.map((t) => (
              <div key={t.t} className={`mr-[2px] flex h-[28px] w-[200px] items-center whitespace-nowrap rounded-b-[5px] pl-3 ${t.active ? "border-b-2 border-[#1651b0] bg-white text-[#333]" : "border-b border-[#bbb] bg-[#e9e9e9]"}`}>
                {t.pre && <svg viewBox="0 0 14 14" className="mr-[5px] size-[14px]"><circle cx="7" cy="7" r="7" fill="#6f9fd6" /><path d="M7 3.500L9.500 7 7 10.500 4.500 7zM6.500 0h1v3h-1zM6.500 11h1v3h-1z" fill="#fff" /></svg>}
                {t.k === "s" ? <StudioIcon /> : <AsmIcon className="size-[18px] text-[#333]" />}
                <span className="ml-[3px] pt-px">{t.t}</span>
              </div>
            ))}
          </div>
        </div>
      </div>
      <Taskbar />
    </div>
  );
}
